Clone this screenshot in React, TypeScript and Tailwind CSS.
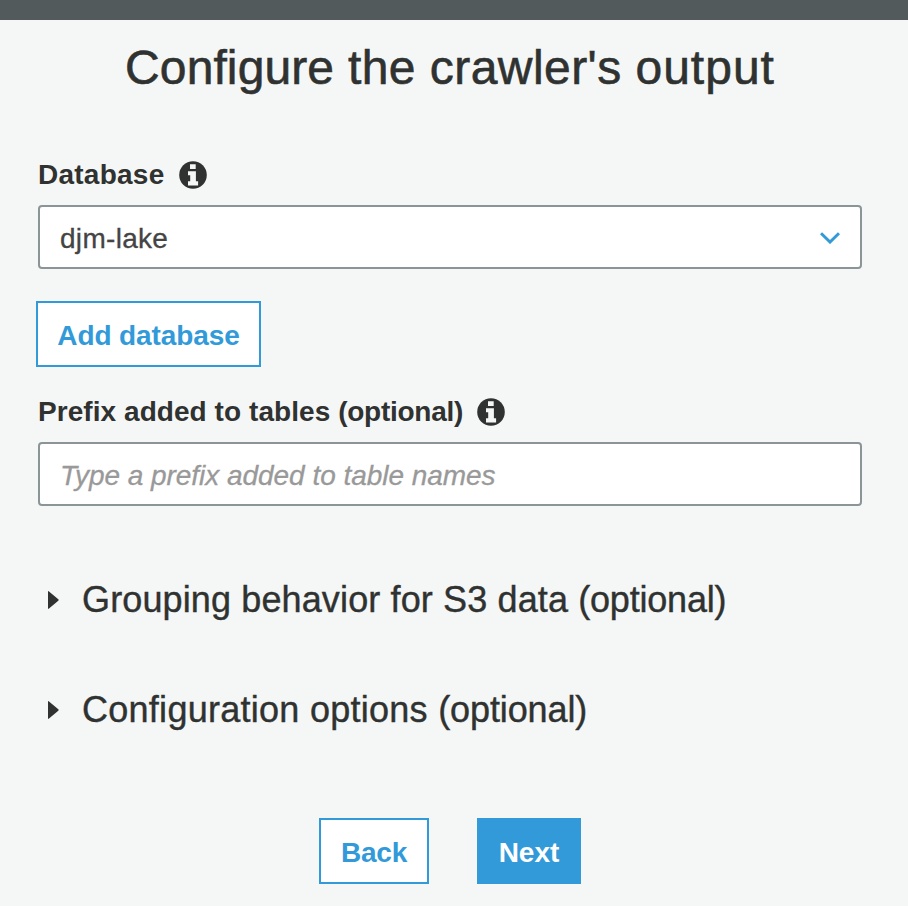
import type { ReactNode } from "react";

function InfoIcon() {
  return (
    <svg viewBox="0 0 28 28" className="ml-[14px] h-7 w-7 shrink-0">
      <circle cx="14" cy="14" r="13.8" className="fill-[#2f3231]" />
      <path d="M11 3.300H16.700V8H11ZM9 10.300H16.900V20.300H19.100V24.600H9V20.300H11.200V14.300H9Z" className="fill-[#f5f7f6]" />
    </svg>
  );
}

function Section({ children }: { children: ReactNode }) {
  return (
    <button className="flex h-11 items-center text-left text-[36px] leading-[44px] [-webkit-text-stroke:0.4px]">
      <svg viewBox="0 0 11 18" className="mr-[23px] ml-[10px] h-[18px] w-[11px] fill-[#2f3231]">
        <path d="M0 .8Q0-.5 1 .5L10.3 8.3Q11 9 10.3 9.700L1 17.500Q0 18.500 0 17.200Z" />
      </svg>
      {children}
    </button>
  );
}

export default function App() {
  return (
    <div className="h-[906px] w-[908px] overflow-hidden bg-[#f5f7f6] font-['Liberation_Sans',Arial,sans-serif] text-[28px] leading-8 text-[#2f3231]">
      <header className="h-5 bg-[#535a5b]" />
      <main className="flex flex-col items-start pr-[46px] pl-[38px]">
        <h1 className="mt-5 h-14 w-full text-center text-[48px] leading-[56px] tracking-[0.45px] whitespace-nowrap [-webkit-text-stroke:0.6px]">
          <span className="tracking-[0.1px]">Configure</span> the crawler's <span className="tracking-[1px]">output</span>
        </h1>

        <label className="mt-[63px] flex h-8 items-center font-bold">
          <span className="tracking-[0.25px]">Database</span>
          <InfoIcon />
        </label>
        <div className="mt-[14px] flex h-16 w-full items-center justify-between rounded-[4px] border-2 border-[#8b9598] bg-white pr-5 pl-5 text-[#444]">
          <span className="pt-[3px] tracking-[0.3px] [-webkit-text-stroke:0.3px]">djm-lake</span>
          <svg viewBox="0 0 20 12" className="mt-px h-3 w-5 fill-none stroke-[#329ad9] stroke-3">
            <path d="M1 1.200L10 10L19 1.200" />
          </svg>
        </div>
        <button className="mt-8 -ml-[2px] h-[66px] w-[225px] border-2 border-[#329ad9] bg-white pt-1 font-bold tracking-[-0.1px] whitespace-nowrap text-[#329ad9]">
          Add database
        </button>

        <label className="mt-[29px] flex h-8 items-center font-bold">
          <span>
            <span className="tracking-[0.06px]">Prefix added to tables </span>
            <span className="tracking-[-0.25px]">(optional)</span>
          </span>
          <InfoIcon />
        </label>
        <input
          placeholder="Type a prefix added to table names"
          className="mt-[14px] h-16 w-full rounded-[4px] border-2 border-[#8b9598] bg-white px-5 pt-1 tracking-[-0.04px] italic outline-none [-webkit-text-stroke:0.3px] placeholder:text-[#999]"
        />

        <div className="mt-[72px] flex flex-col gap-[66px]">
          <Section>
            <span className="tracking-[0.13px]">
              Grouping behavior for S3 data <span className="tracking-[-0.2px]">(optional)</span>
            </span>
          </Section>
          <Section>
            <span className="tracking-[0.27px]">
              Configuration options <span className="tracking-[-0.1px]">(optional)</span>
            </span>
          </Section>
        </div>

        <div className="mt-[86px] flex w-full justify-center gap-12 font-bold">
          <button className="h-[66px] w-[110px] border-2 border-[#329ad9] bg-white pt-1 tracking-[-0.2px] text-[#329ad9]">Back</button>
          <button className="h-[66px] w-[104px] bg-[#329ad9] pt-1 text-white">Next</button>
        </div>
      </main>
    </div>
  );
}
